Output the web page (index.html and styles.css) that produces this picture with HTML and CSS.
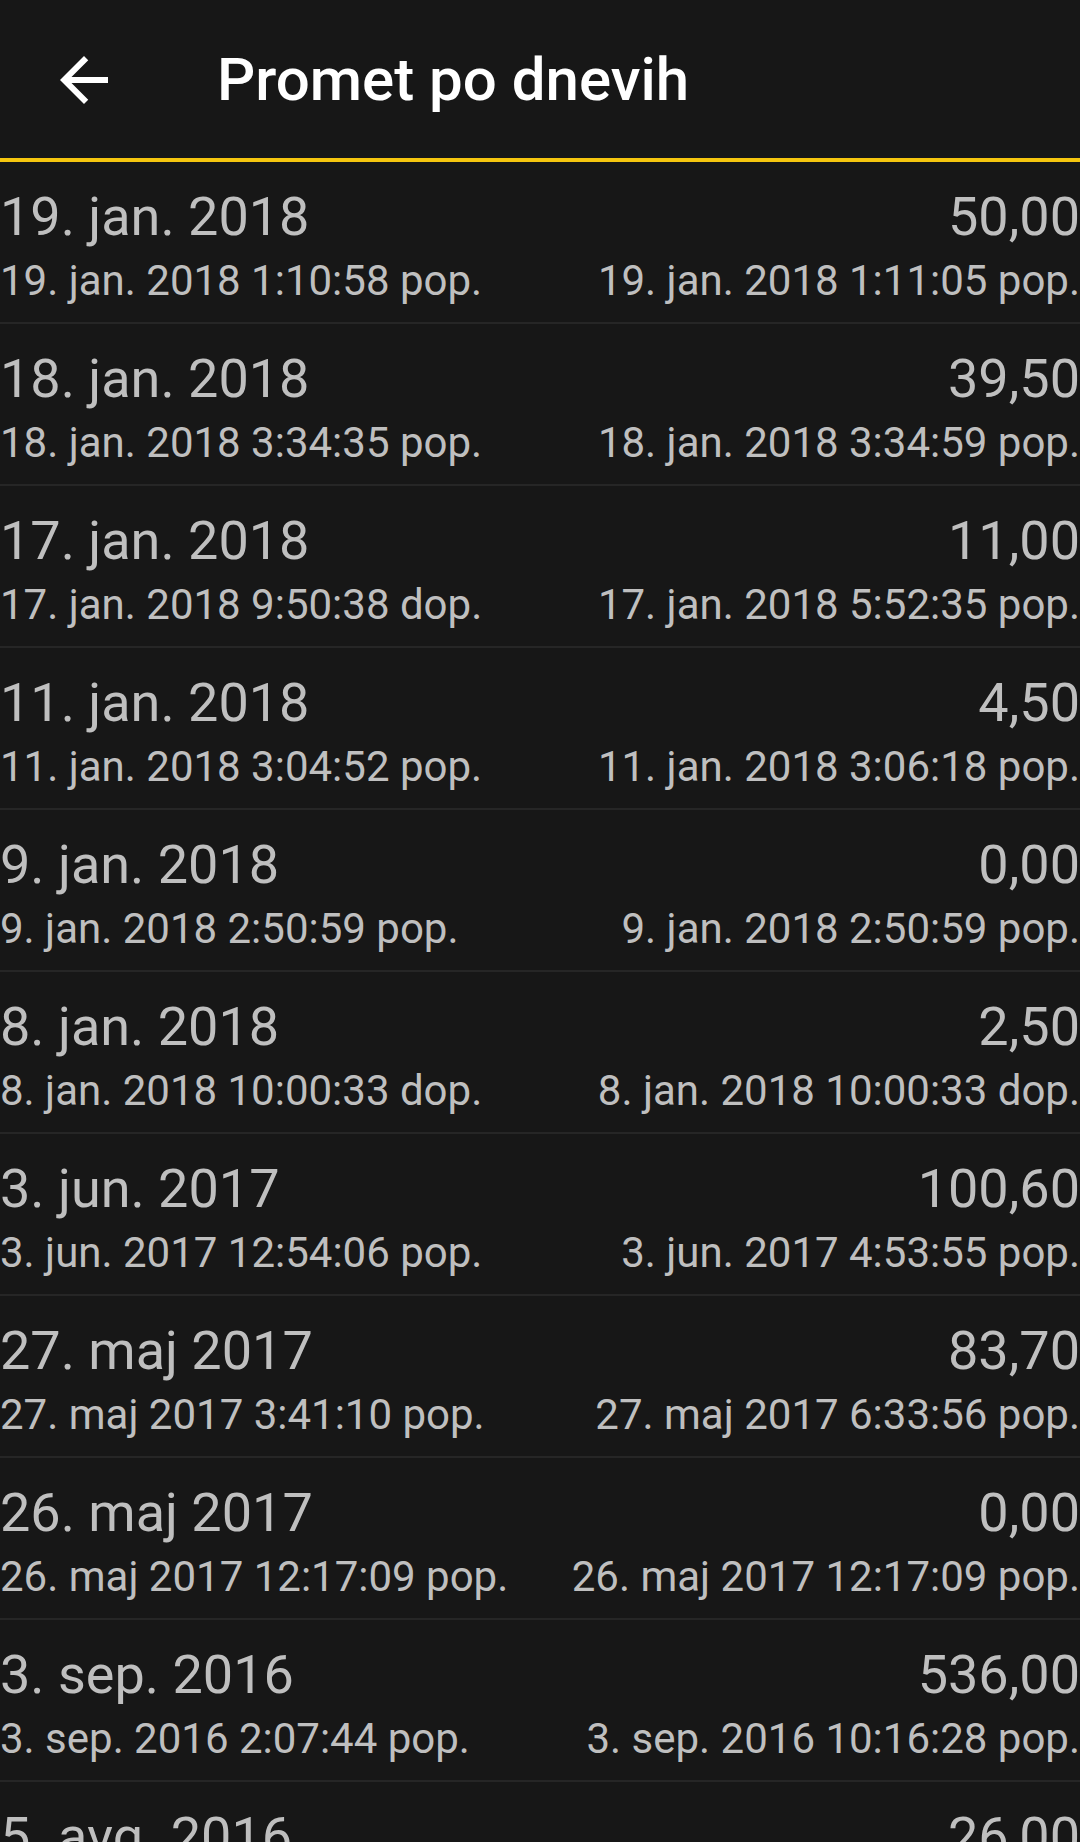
FILE: index.html
```html
<!DOCTYPE html>
<html lang="sl">
<head>
  <meta charset="UTF-8">
  <title>Promet po dnevih</title>
  <link rel="stylesheet" href="styles.css">
</head>
<body>
  <header class="toolbar">
    <button class="back" aria-label="Nazaj">
      <svg viewBox="0 0 24 24" width="72" height="72">
        <path fill="#ffffff" d="M20 11H7.83l5.59-5.59L12 4l-8 8 8 8 1.41-1.41L7.83 13H20v-2z"/>
      </svg>
    </button>
    <h1 class="title">Promet po dnevih</h1>
  </header>

  <ul class="days">
    <li class="day">
      <div class="col">
        <span class="date">19. jan. 2018</span>
        <span class="time">19. jan. 2018 1:10:58 pop.</span>
      </div>
      <div class="col right">
        <span class="date">50,00</span>
        <span class="time">19. jan. 2018 1:11:05 pop.</span>
      </div>
    </li>
    <li class="day">
      <div class="col">
        <span class="date">18. jan. 2018</span>
        <span class="time">18. jan. 2018 3:34:35 pop.</span>
      </div>
      <div class="col right">
        <span class="date">39,50</span>
        <span class="time">18. jan. 2018 3:34:59 pop.</span>
      </div>
    </li>
    <li class="day">
      <div class="col">
        <span class="date">17. jan. 2018</span>
        <span class="time">17. jan. 2018 9:50:38 dop.</span>
      </div>
      <div class="col right">
        <span class="date">11,00</span>
        <span class="time">17. jan. 2018 5:52:35 pop.</span>
      </div>
    </li>
    <li class="day">
      <div class="col">
        <span class="date">11. jan. 2018</span>
        <span class="time">11. jan. 2018 3:04:52 pop.</span>
      </div>
      <div class="col right">
        <span class="date">4,50</span>
        <span class="time">11. jan. 2018 3:06:18 pop.</span>
      </div>
    </li>
    <li class="day">
      <div class="col">
        <span class="date">9. jan. 2018</span>
        <span class="time">9. jan. 2018 2:50:59 pop.</span>
      </div>
      <div class="col right">
        <span class="date">0,00</span>
        <span class="time">9. jan. 2018 2:50:59 pop.</span>
      </div>
    </li>
    <li class="day">
      <div class="col">
        <span class="date">8. jan. 2018</span>
        <span class="time">8. jan. 2018 10:00:33 dop.</span>
      </div>
      <div class="col right">
        <span class="date">2,50</span>
        <span class="time">8. jan. 2018 10:00:33 dop.</span>
      </div>
    </li>
    <li class="day">
      <div class="col">
        <span class="date">3. jun. 2017</span>
        <span class="time">3. jun. 2017 12:54:06 pop.</span>
      </div>
      <div class="col right">
        <span class="date">100,60</span>
        <span class="time">3. jun. 2017 4:53:55 pop.</span>
      </div>
    </li>
    <li class="day">
      <div class="col">
        <span class="date">27. maj 2017</span>
        <span class="time">27. maj 2017 3:41:10 pop.</span>
      </div>
      <div class="col right">
        <span class="date">83,70</span>
        <span class="time">27. maj 2017 6:33:56 pop.</span>
      </div>
    </li>
    <li class="day">
      <div class="col">
        <span class="date">26. maj 2017</span>
        <span class="time">26. maj 2017 12:17:09 pop.</span>
      </div>
      <div class="col right">
        <span class="date">0,00</span>
        <span class="time">26. maj 2017 12:17:09 pop.</span>
      </div>
    </li>
    <li class="day">
      <div class="col">
        <span class="date">3. sep. 2016</span>
        <span class="time">3. sep. 2016 2:07:44 pop.</span>
      </div>
      <div class="col right">
        <span class="date">536,00</span>
        <span class="time">3. sep. 2016 10:16:28 pop.</span>
      </div>
    </li>
    <li class="day">
      <div class="col">
        <span class="date">5. avg. 2016</span>
        <span class="time">5. avg. 2016 11:20:14 dop.</span>
      </div>
      <div class="col right">
        <span class="date">26,00</span>
        <span class="time">5. avg. 2016 12:02:41 pop.</span>
      </div>
    </li>
  </ul>
</body>
</html>
```

FILE: styles.css
```css
html, body {
  margin: 0;
  padding: 0;
  background-color: #171717;
}
body {
  font-family: Roboto, "Noto Sans", sans-serif;
  color: #bfbfbf;
  overflow: hidden;
}
.toolbar {
  display: flex;
  align-items: center;
  height: 158px;
  border-bottom: 4px solid #f5c60f;
  background-color: #171717;
}
.back {
  display: flex;
  width: 72px;
  height: 72px;
  margin-left: 48px;
  margin-top: 1px;
  padding: 0;
  border: none;
  background: none;
}
.title {
  margin: 0 0 0 97px;
  font-size: 60px;
  font-weight: 500;
  color: #ffffff;
}
.days {
  list-style: none;
  margin: 0;
  padding: 0;
}
.day {
  display: flex;
  justify-content: space-between;
  height: 160px;
  box-sizing: content-box;
  border-bottom: 2px solid #262626;
}
.col {
  display: flex;
  flex-direction: column;
  padding-top: 23px;
}
.right {
  align-items: flex-end;
}
.date {
  font-size: 54px;
  line-height: 64px;
}
.time {
  margin-top: 7px;
  font-size: 42px;
  line-height: 50px;
}
```
